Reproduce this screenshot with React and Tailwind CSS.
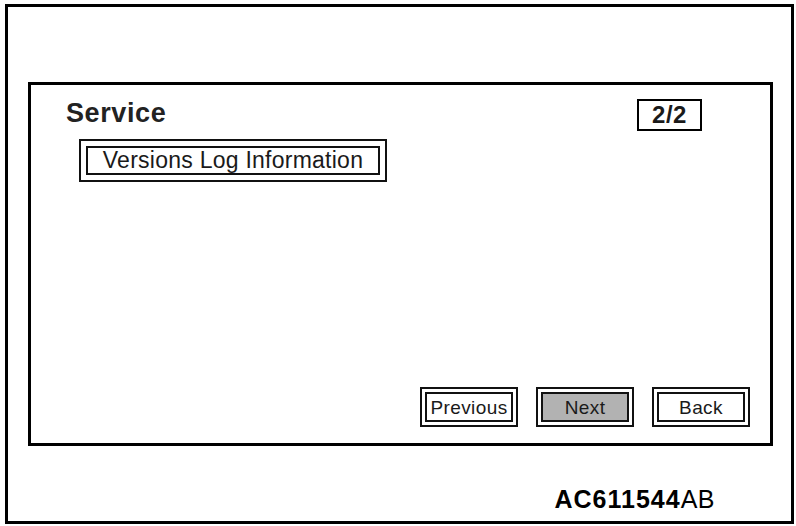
export default function App() {
  const font = { fontFamily: '"Liberation Sans", Arial, Helvetica, sans-serif' };
  return (
    <div className="w-[796px] h-[526px] bg-white relative overflow-hidden" style={font}>
      <div className="ml-[5px] mt-[4px] w-[789px] h-[520px] border-[3px] border-black flex flex-col pt-[75px]">
        <div className="ml-[20px] w-[745px] h-[364px] border-[3px] border-black flex flex-col">
          <div className="flex justify-between items-start mt-[14px]">
            <div className="ml-[35px] mt-[1px] text-[27px] leading-[27px] font-bold tracking-[0.6px] text-[#222]">Service</div>
            <div className="mr-[68px] w-[65px] h-[32px] border-2 border-black flex items-center justify-center text-[24px] leading-none font-bold tracking-[0.5px] text-[#1a1a1a]">
              2/2
            </div>
          </div>
          <div className="ml-[48px] mt-[8px] w-[308px] h-[43px] border-2 border-[#111] p-[5px]">
            <div className="w-full h-full border-2 border-[#111] flex items-center justify-center text-[23px] leading-none tracking-[0.25px] text-[#1a1a1a] pb-[1px]">
              Versions Log Information
            </div>
          </div>
          <div className="flex-1" />
          <div className="flex justify-end gap-[18px] mr-[20px] mb-[16px]">
            <div className="w-[98px] h-[40px] border-2 border-[#111] p-[3px]">
              <div className="w-full h-full border-2 border-[#111] flex items-center justify-center text-[19px] leading-none tracking-[0.4px] text-[#1a1a1a]">
                Previous
              </div>
            </div>
            <div className="w-[98px] h-[40px] border-2 border-[#111] p-[3px]">
              <div className="w-full h-full border-2 border-[#111] bg-[#b2b2b2] flex items-center justify-center text-[19px] leading-none tracking-[0.4px] text-[#1a1a1a]">
                Next
              </div>
            </div>
            <div className="w-[98px] h-[40px] border-2 border-[#111] p-[3px]">
              <div className="w-full h-full border-2 border-[#111] flex items-center justify-center text-[19px] leading-none tracking-[0.4px] text-[#1a1a1a]">
                Back
              </div>
            </div>
          </div>
        </div>
        <div className="mt-[41px] pr-[76px] flex justify-end text-[25px] leading-[25px] tracking-[1px] text-black">
          <span className="font-bold">AC611544</span>
          <span className="tracking-[0.5px]">AB</span>
        </div>
      </div>
    </div>
  );
}
